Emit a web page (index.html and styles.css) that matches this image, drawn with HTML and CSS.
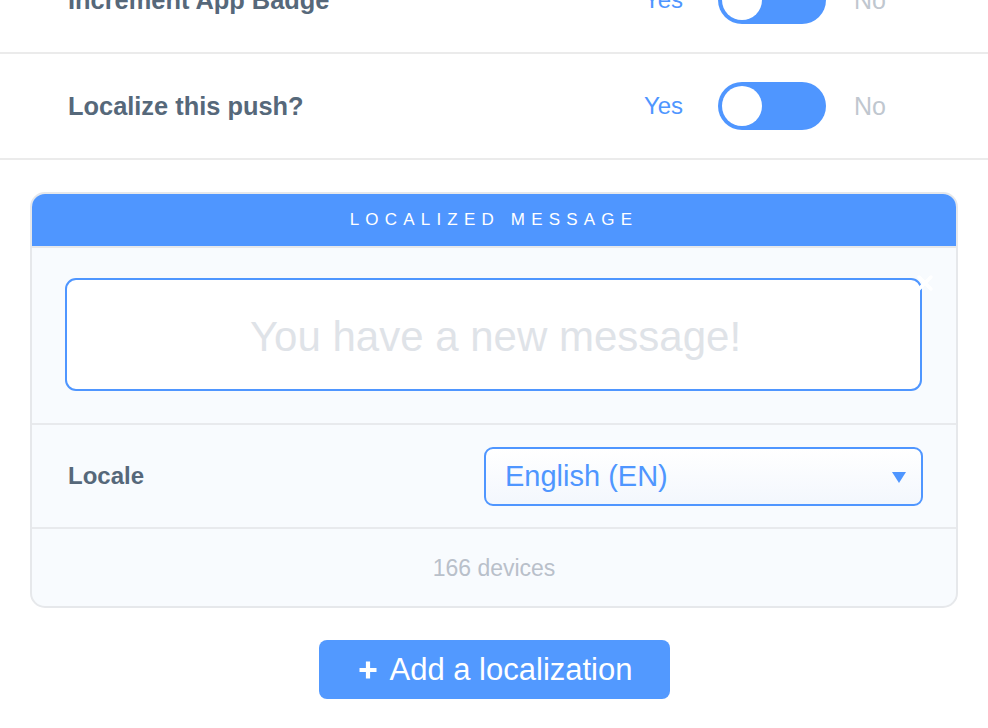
FILE: index.html
```html
<!DOCTYPE html>
<html lang="en">
<head>
<meta charset="utf-8">
<title>Localized message</title>
<link rel="stylesheet" href="styles.css">
</head>
<body>
<div class="page">
  <div class="row">
    <span class="row-label">Increment App Badge</span>
    <div class="switch-group">
      <span class="opt opt-yes">Yes</span>
      <span class="toggle"><span class="knob"></span></span>
      <span class="opt opt-no">No</span>
    </div>
  </div>
  <div class="row">
    <span class="row-label">Localize this push?</span>
    <div class="switch-group">
      <span class="opt opt-yes">Yes</span>
      <span class="toggle"><span class="knob"></span></span>
      <span class="opt opt-no">No</span>
    </div>
  </div>

  <section class="card">
    <header class="card-head">LOCALIZED MESSAGE</header>
    <div class="card-msg">
      <div class="msg-box">
        <span class="placeholder">You have a new message!</span>
        <svg class="close" width="18" height="18" viewBox="0 0 18 18" aria-hidden="true"><path d="M3 3 L15 15 M15 3 L3 15" stroke="#ffffff" stroke-width="3.5" stroke-linecap="round"/></svg>
      </div>
    </div>
    <div class="card-locale">
      <span class="locale-label">Locale</span>
      <div class="select">
        <span class="select-text">English (EN)</span>
        <svg class="caret" width="14" height="11" viewBox="0 0 14 11" aria-hidden="true"><path d="M0 0 H14 L7 11 Z" fill="#4f96ff"/></svg>
      </div>
    </div>
    <div class="card-foot">166 devices</div>
  </section>

  <div class="actions">
    <button class="add-btn" type="button">
      <svg class="plus" width="20" height="20" viewBox="0 0 20 20" aria-hidden="true"><path d="M10 1.5 V18.5 M1.5 10 H18.5" stroke="#ffffff" stroke-width="4.2"/></svg>
      <span>Add a localization</span>
    </button>
  </div>
</div>
</body>
</html>
```

FILE: styles.css
```css
html, body {
  margin: 0;
  padding: 0;
  background: #ffffff;
  font-family: "Liberation Sans", Arial, Helvetica, sans-serif;
  overflow: hidden;
}

.page {
  margin-top: -52px;
  width: 988px;
}

.row {
  height: 104px;
  border-bottom: 2px solid #ebebeb;
  display: flex;
  align-items: center;
  justify-content: space-between;
  padding: 0 102px 0 68px;
}

.row-label {
  font-size: 25.4px;
  font-weight: bold;
  color: #56687a;
}

.switch-group {
  display: flex;
  align-items: center;
}

.opt {
  font-size: 24px;
  line-height: 28px;
}

.opt-yes {
  color: #4f96ff;
  margin-right: 35px;
}

.opt-no {
  color: #c0c7cf;
  margin-left: 28px;
  font-size: 25px;
}

.toggle {
  width: 108px;
  height: 48px;
  border-radius: 24px;
  background: #4f96ff;
  display: flex;
  align-items: center;
  padding-left: 4px;
  box-sizing: border-box;
}

.knob {
  width: 40px;
  height: 40px;
  border-radius: 50%;
  background: #ffffff;
}

.card {
  margin: 32px 30px 0 30px;
  border: 2px solid #e6e8eb;
  border-radius: 15px;
  overflow: hidden;
  background: #f8fbfe;
}

.card-head {
  height: 52px;
  background: #4f96ff;
  border-bottom: 2px solid #e6e8eb;
  color: #ffffff;
  font-size: 17px;
  letter-spacing: 6.2px;
  display: flex;
  align-items: center;
  justify-content: center;
  padding-left: 0;
}

.card-msg {
  padding: 30px 34px 32px 33px;
  border-bottom: 2px solid #e8eaed;
}

.msg-box {
  position: relative;
  height: 113px;
  box-sizing: border-box;
  border: 2px solid #4f96ff;
  border-radius: 11px;
  background: #ffffff;
  display: flex;
  align-items: center;
  justify-content: center;
}

.placeholder {
  font-size: 42px;
  color: #dfe3e8;
  margin-top: 4px;
  margin-left: 4px;
}

.close {
  position: absolute;
  top: -6px;
  right: -14px;
}

.card-locale {
  height: 104px;
  box-sizing: border-box;
  padding: 0 33px 0 36px;
  border-bottom: 2px solid #e8eaed;
  display: flex;
  align-items: center;
  justify-content: space-between;
}

.locale-label {
  font-size: 24px;
  font-weight: bold;
  color: #56687a;
}

.select {
  width: 439px;
  height: 59px;
  box-sizing: border-box;
  border: 2px solid #4f96ff;
  border-radius: 9px;
  background: linear-gradient(#ffffff, #f3f7fd);
  display: flex;
  align-items: center;
  justify-content: space-between;
  padding: 0 15px 0 19px;
}

.select-text {
  font-size: 29px;
  color: #4f96ff;
}

.caret {
  margin-top: 2px;
}

.card-foot {
  height: 77px;
  display: flex;
  align-items: center;
  justify-content: center;
  font-size: 23px;
  color: #b9c0ca;
  padding-top: 2px;
  box-sizing: border-box;
}

.actions {
  display: flex;
  justify-content: center;
  margin-top: 32px;
}

.add-btn {
  width: 351px;
  height: 59px;
  border: none;
  border-radius: 8px;
  background: #5299ff;
  color: #ffffff;
  font-family: "Liberation Sans", Arial, Helvetica, sans-serif;
  font-size: 31px;
  display: flex;
  align-items: center;
  justify-content: center;
  gap: 12px;
  padding: 0 0 0 2px;
}

.plus {
  margin-top: 1px;
}
```
